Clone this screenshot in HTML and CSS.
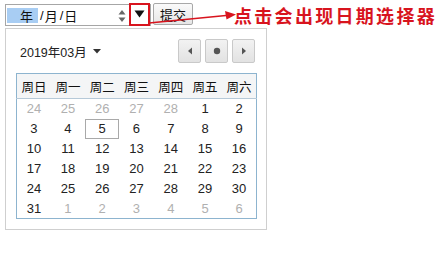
FILE: index.html
```
<!DOCTYPE html>
<html lang="zh">
<head>
<meta charset="utf-8">
<title>日期选择器</title>
<link rel="stylesheet" href="styles.css">
</head>
<body>
<div class="page">
  <div class="toolbar">
    <div class="date-input">
      <span class="seg seg-year">年</span><span class="sep">/</span><span class="seg">月</span><span class="sep">/</span><span class="seg">日</span>
      <span class="spin"><svg width="8" height="14" viewBox="0 0 8 14"><path d="M4 1 L7.5 5.5 L0.5 5.5 Z" fill="#666"/><path d="M4 13 L7.5 8.5 L0.5 8.5 Z" fill="#666"/></svg></span>
      <span class="drop"><svg width="11" height="8" viewBox="0 0 11 8"><path d="M0.5 0.5 L10.5 0.5 L5.5 7.5 Z" fill="#111"/></svg></span>
    </div>
    <button class="submit">提交</button>
    <span class="note">点击会出现日期选择器</span>
  </div>

  <div class="picker">
    <div class="picker-head">
      <span class="title">2019年03月 <svg width="8" height="5" viewBox="0 0 8 5"><path d="M0 0 L8 0 L4 4.5 Z" fill="#333"/></svg></span>
      <div class="navs">
        <span class="nav"><svg width="6" height="8" viewBox="0 0 6 8"><path d="M5 0.5 L5 7.5 L1 4 Z" fill="#555"/></svg></span>
        <span class="nav"><svg width="8" height="8" viewBox="0 0 8 8"><circle cx="4" cy="4" r="3.2" fill="#555"/></svg></span>
        <span class="nav"><svg width="6" height="8" viewBox="0 0 6 8"><path d="M1 0.5 L1 7.5 L5 4 Z" fill="#555"/></svg></span>
      </div>
    </div>
    <table class="cal">
      <thead>
        <tr><th>周日</th><th>周一</th><th>周二</th><th>周三</th><th>周四</th><th>周五</th><th>周六</th></tr>
      </thead>
      <tbody>
        <tr><td class="o">24</td><td class="o">25</td><td class="o">26</td><td class="o">27</td><td class="o">28</td><td>1</td><td>2</td></tr>
        <tr><td>3</td><td>4</td><td class="sel">5</td><td>6</td><td>7</td><td>8</td><td>9</td></tr>
        <tr><td>10</td><td>11</td><td>12</td><td>13</td><td>14</td><td>15</td><td>16</td></tr>
        <tr><td>17</td><td>18</td><td>19</td><td>20</td><td>21</td><td>22</td><td>23</td></tr>
        <tr><td>24</td><td>25</td><td>26</td><td>27</td><td>28</td><td>29</td><td>30</td></tr>
        <tr><td>31</td><td class="o">1</td><td class="o">2</td><td class="o">3</td><td class="o">4</td><td class="o">5</td><td class="o">6</td></tr>
      </tbody>
    </table>
  </div>

  <svg class="arrow" width="447" height="40" viewBox="0 0 447 40">
    <line x1="149" y1="23" x2="226" y2="15.5" stroke="#d8141e" stroke-width="1.6"/>
    <path d="M236 14.5 L225 11 L226.5 19.5 Z" fill="#d8141e"/>
  </svg>
</div>
</body>
</html>
```
FILE: styles.css
```
* { box-sizing: border-box; }
html, body { margin: 0; padding: 0; background: #fff; }
body {
  font-family: "Liberation Sans", "Noto Sans CJK SC", sans-serif;
  font-size: 13px;
  color: #222;
}
.page {
  position: relative;
  width: 447px;
  height: 276px;
  padding: 4px 0 0 5px;
}
.toolbar {
  display: flex;
  align-items: flex-start;
  height: 22px;
}
.date-input {
  position: relative;
  display: flex;
  align-items: center;
  width: 146px;
  height: 22px;
  border: 1px solid #a6a6a6;
  padding-left: 1px;
  font-family: "Noto Sans CJK SC", sans-serif;
  font-size: 13px;
  color: #111;
}
.seg { line-height: 15px; }
.seg-year {
  background: #a8cdf3;
  padding: 0 5px 0 13px;
  height: 15px;
  display: inline-flex;
  align-items: center;
}
.sep { margin: 0 1px 0 2px; font-family: "Liberation Sans", sans-serif; }
.spin {
  display: flex;
  margin-left: 41px;
  margin-top: 1px;
}
.drop {
  display: flex;
  align-items: center;
  justify-content: center;
  width: 21px;
  height: 23px;
  margin-left: 3px;
  margin-top: -2px;
  border: 2px solid #d8141e;
}
.submit {
  width: 40px;
  height: 22px;
  margin: -1px 0 0 2px;
  padding: 0;
  border: 1px solid #a8a8a8;
  border-radius: 2px;
  background: linear-gradient(#fafafa, #e6e6e6);
  font-family: "Noto Sans CJK SC", sans-serif;
  font-size: 13px;
  color: #111;
}
.note {
  margin: 1px 0 0 41px;
  font-family: "Noto Sans CJK SC", sans-serif;
  font-size: 18px;
  font-weight: bold;
  letter-spacing: 2.3px;
  line-height: 20px;
  color: #d8141e;
}
.picker {
  width: 262px;
  height: 202px;
  margin-top: 2px;
  border: 1px solid #cfcfcf;
  padding: 10px 10px 0 10px;
}
.picker-head {
  display: flex;
  align-items: center;
  justify-content: space-between;
  height: 24px;
  padding-left: 4px;
}
.title {
  display: flex;
  align-items: center;
  gap: 6px;
  font-family: "Liberation Sans", "Noto Sans CJK SC", sans-serif;
  font-size: 12.5px;
  color: #222;
}
.navs {
  display: flex;
  gap: 4px;
  padding-right: 1px;
}
.nav {
  display: flex;
  align-items: center;
  justify-content: center;
  width: 23px;
  height: 24px;
  border: 1px solid #c9c9c9;
  border-radius: 2px;
  background: linear-gradient(#f2f2f2, #e2e2e2);
}
.cal {
  margin-top: 10px;
  width: 241px;
  border-collapse: collapse;
  border: 1px solid #8db4cf;
  table-layout: fixed;
}
.cal th {
  height: 25px;
  padding: 0;
  background: #f4f5f6;
  border-bottom: 1px solid #b6c9d8;
  font-family: "Noto Sans CJK SC", sans-serif;
  font-weight: normal;
  font-size: 12.5px;
  color: #111;
}
.cal td {
  height: 20px;
  padding: 0;
  text-align: center;
  font-size: 13px;
  color: #222;
}
.cal td.o { color: #b0b0b0; }
.cal td.sel { outline: 1px solid #a9a9a9; outline-offset: -1px; }
.arrow {
  position: absolute;
  left: 0;
  top: 0;
  pointer-events: none;
}
```
